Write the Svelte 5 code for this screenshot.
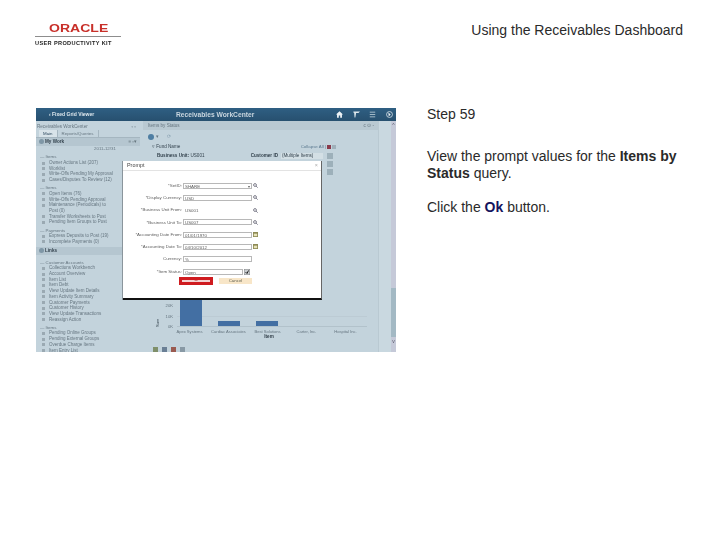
<script>
  const work = [
    { h: 'Items', rows: ['Owner Actions List (207)', 'Worklist', 'Write-Offs Pending My Approval', 'Cases/Disputes To Review (12)'] },
    { h: 'Items', rows: ['Open Items (76)', 'Write-Offs Pending Approval', 'Maintenance (Periodicals) to Post (0)', 'Transfer Worksheets to Post', 'Pending Item Groups to Post'] },
    { h: 'Payments', rows: ['Express Deposits to Post (19)', 'Incomplete Payments (0)'] }
  ]
  const links = [
    { h: 'Customer Accounts', rows: ['Collections Workbench', 'Account Overview', 'Item List', 'Item Debt', 'View Update Item Details', 'Item Activity Summary', 'Customer Payments', 'Customer History', 'View Update Transactions', 'Reassign Action'] },
    { h: 'Items', rows: ['Pending Online Groups', 'Pending External Groups', 'Overdue Charge Items', 'Item Entry List'] }
  ]
  const fields = [
    { label: '*SetID:', value: 'SHARE', kind: 'search', mark: true },
    { label: '*Display Currency:', value: 'USD', kind: 'search' },
    { label: '*Business Unit From:', value: 'US001', kind: 'search', bare: true },
    { label: '*Business Unit To:', value: 'US007', kind: 'search' },
    { label: '*Accounting Date From:', value: '01/01/1970', kind: 'date' },
    { label: '*Accounting Date To:', value: '04/10/2012', kind: 'date' },
    { label: 'Currency:', value: '%', kind: 'none' },
    { label: '*Item Status:', value: 'Open', kind: 'select' }
  ]
  const ticks = ['30K', '20K', '10K', '0K']
  const bars = [
    { label: 'Apex Systems', height: 30 },
    { label: 'Cardiac Associates', height: 5 },
    { label: 'Best Solutions', height: 5 },
    { label: 'Carter, Inc.', height: 0 },
    { label: 'Hospital Inc.', height: 0 }
  ]
</script>

<div class="page">
  <header class="top">
    <div class="logo">
      <div class="oracle">ORACLE</div>
      <div class="kit">USER PRODUCTIVITY KIT</div>
    </div>
    <div class="doc-title">Using the Receivables Dashboard</div>
  </header>

  <div class="content">
    <div class="shot">
      <div class="titlebar">
        <span class="back">‹ Fixed Grid Viewer</span>
        <span class="wc-title">Receivables WorkCenter</span>
        <span class="tb-icons">
          <svg width="7" height="7" viewBox="0 0 10 9"><path d="M5 0 10 4.5H8.5V9H6V6H4V9H1.5V4.5H0Z" fill="#eef3f6"/></svg>
          <svg width="7" height="7" viewBox="0 0 9 8"><path d="M1 0H9L7 2.2H4L3 8H2L1.5 2.2 0 .8Z" fill="#dde7ec"/></svg>
          <svg width="7" height="7" viewBox="0 0 9 8"><path d="M1 1H8M1 4H8M1 7H8" stroke="#c5d6df"/></svg>
          <svg width="7" height="7" viewBox="0 0 9 9"><circle cx="4.5" cy="4.5" r="3.8" fill="none" stroke="#dde7ec"/><path d="M3 2 6 4.5 3.5 7Z" fill="#eef3f6"/></svg>
        </span>
      </div>

      <div class="workarea">
        <aside class="nav">
          <div class="nav-head"><span>Receivables WorkCenter</span><span>▫ ▫</span></div>
          <div class="tabs"><span class="tab on">Main</span><span class="tab">Reports/Queries</span></div>
          <div class="band"><span class="band-name"><i class="globe"></i>My Work</span><span class="band-side">≡ ▫▾</span></div>
          <div class="date">2011-12/31</div>
          {#each work as group}
            <div class="group-h">— {group.h}</div>
            {#each group.rows as row}
              <div class="nav-row">{row}</div>
            {/each}
          {/each}
          <div class="band links"><span class="band-name"><i class="globe"></i>Links</span><span class="band-side">▫</span></div>
          {#each links as group}
            <div class="group-h">— {group.h}</div>
            {#each group.rows as row}
              <div class="nav-row">{row}</div>
            {/each}
          {/each}
        </aside>

        <main class="pane">
          <div class="pane-head"><span>Items by Status</span><span>c ⊙ -</span></div>
          <div class="toolbar"><i class="gear"></i><span>▾</span><span class="tool2">⟳</span></div>
          <div class="row-fund">
            <span class="p-label">▿ Fund Name</span>
            <span class="actions">Collapse All | <i class="mini red"></i><i class="mini"></i></span>
          </div>
          <div class="row-prompt">
            <span class="p-label"><b>Business Unit:</b> US001</span>
            <span class="p-right"><b>Customer ID</b><span class="p-input">(Multiple Items)</span><i class="p-btn"></i></span>
          </div>
          <div class="p-extra"><i class="p-btn"></i><i class="p-btn"></i></div>

          <div class="chart">
            <div class="plot">
              <span class="y-title">Sum</span>
              <div class="y-axis">
                {#each ticks as t}<span>{t}</span>{/each}
              </div>
              <div class="bars">
                {#each bars as bar}
                  <div class="bar-slot">
                    <div class="bar" style="height: {bar.height}px"></div>
                  </div>
                {/each}
              </div>
            </div>
            <div class="x-labels">
              {#each bars as bar}<span>{bar.label}</span>{/each}
            </div>
            <div class="x-title">Item</div>
            <div class="chart-icons"><i class="ci a"></i><i class="ci b"></i><i class="ci c"></i><i class="ci d"></i></div>
          </div>
        </main>

        <div class="gutter"></div>
        <div class="scroll">
          <span class="arrow">^</span>
          <div class="thumb"></div>
          <span class="arrow end">v</span>
        </div>
      </div>

      <div class="dialog">
        <div class="dialog-head"><span>Prompt</span><span class="x">×</span></div>
        <div class="form">
          {#each fields as f}
            <div class="field">
              <span class="f-label">{f.label}</span>
              <span class="f-input" class:bare={f.bare} class:short={f.kind === 'select'}>
                {f.value}
                {#if f.mark}<em>▾</em>{/if}
              </span>
              {#if f.kind === 'search'}
                <svg class="f-icon" width="5" height="5" viewBox="0 0 6 6"><circle cx="2.4" cy="2.4" r="1.7" fill="none" stroke="#667"/><path d="M3.7 3.7 5.6 5.6" stroke="#667"/></svg>
              {:else if f.kind === 'date'}
                <svg class="f-icon" width="5" height="5" viewBox="0 0 6 6"><rect width="6" height="6" fill="#8d8a55"/><rect x="1" y="2" width="4" height="3" fill="#e6e2b8"/></svg>
              {:else if f.kind === 'select'}
                <svg class="f-icon sel" width="6" height="6" viewBox="0 0 6 6"><rect width="6" height="6" fill="#c9cdd0" stroke="#666" stroke-width=".6"/><path d="M1.5 3 3 4.5 4.5 1.5" fill="none" stroke="#222"/></svg>
              {/if}
            </div>
          {/each}
        </div>
        <div class="dialog-btns">
          <span class="ok"><span class="ok-inner">OK</span></span>
          <span class="cancel">Cancel</span>
        </div>
      </div>
    </div>

    <section class="copy">
      <p class="step">Step 59</p>
      <p>View the prompt values for the <b>Items by Status</b> query.</p>
      <p>Click the <b class="ok-word">Ok</b> button.</p>
    </section>
  </div>
</div>

<style>
  :global(body) {
    margin: 0;
    background: #fff;
  }

  .page {
    width: 720px;
    height: 540px;
    overflow: hidden;
    font-family: 'Liberation Sans', Arial, sans-serif;
    color: #1c1c1c;
  }

  .top {
    height: 108px;
    display: flex;
    justify-content: space-between;
    align-items: flex-start;
    padding: 0 37px 0 35px;
    box-sizing: border-box;
  }

  .logo {
    width: 86px;
    margin-top: 23px;
  }

  .oracle {
    height: 13px;
    padding-left: 14px;
    font-size: 11.5px;
    line-height: 10px;
    font-weight: bold;
    color: #c8302a;
    transform: scaleX(1.22);
    transform-origin: 14px 0;
    box-sizing: border-box;
    filter: blur(0.3px);
  }

  .kit {
    padding-top: 3px;
    border-top: 1px solid #8d8d8d;
    font-size: 5.6px;
    line-height: 7px;
    font-weight: bold;
    letter-spacing: 0.36px;
    white-space: nowrap;
    filter: blur(0.2px);
  }

  .doc-title {
    margin-top: 22px;
    font-size: 14px;
    line-height: 16px;
    white-space: nowrap;
    color: #2a2a2a;
  }

  .content {
    display: flex;
    align-items: flex-start;
    padding-left: 36px;
  }

  .shot {
    position: relative;
    width: 360px;
    height: 244px;
    flex: none;
    overflow: hidden;
    display: flex;
    flex-direction: column;
    background: #c3d3dc;
    font-size: 4.6px;
    line-height: 5.7px;
    color: #667680;
    filter: blur(0.4px);
  }

  .titlebar {
    height: 13px;
    flex: none;
    display: grid;
    grid-template-columns: 127px 1fr auto;
    align-items: center;
    padding: 0 3px 0 13px;
    background: linear-gradient(#2f5f83, #27506f);
    color: #dfe8ee;
  }

  .back {
    font-size: 5px;
    font-weight: bold;
  }

  .wc-title {
    font-size: 6.7px;
    font-weight: bold;
    color: #c9d6df;
  }

  .tb-icons {
    display: flex;
    align-items: center;
    gap: 9.6px;
  }

  .workarea {
    flex: 1;
    min-height: 0;
    display: flex;
  }

  .nav {
    width: 104px;
    flex: none;
    overflow: hidden;
    white-space: nowrap;
  }

  .nav-head {
    display: flex;
    justify-content: space-between;
    height: 9px;
    padding: 3px 4px 0 1px;
    box-sizing: border-box;
  }

  .tabs {
    display: flex;
    height: 7px;
    padding-left: 3px;
    border-bottom: 1px solid #a5b6c0;
  }

  .tab {
    padding: 1px 4px 0;
    border-right: 1px solid #a5b6c0;
    font-size: 4.4px;
  }

  .tab.on {
    background: #d8e3e9;
    color: #2f4a5f;
  }

  .band {
    display: flex;
    justify-content: space-between;
    align-items: center;
    height: 8px;
    padding: 0 3px 0 3px;
    background: #b5c6d0;
  }

  .band-name {
    display: flex;
    align-items: center;
    gap: 1px;
    font-weight: bold;
    color: #33424d;
  }

  .band-side {
    color: #64737c;
  }

  .globe {
    width: 5px;
    height: 5px;
    border-radius: 50%;
    background: #7f97a6;
  }

  .links {
    margin-top: 2px;
    margin-bottom: 5px;
  }

  .date {
    height: 6px;
    padding-left: 58px;
    font-size: 4.4px;
  }

  .group-h {
    height: 5.7px;
    margin-top: 2.4px;
    padding-left: 4px;
    font-size: 4.4px;
  }

  .nav-row {
    min-height: 5.7px;
    padding: 0 27px 0 13px;
    position: relative;
    white-space: normal;
    font-size: 4.5px;
  }

  /* little doc icon before each link */
  .nav-row::before {
    content: '';
    position: absolute;
    left: 6px;
    top: 1.5px;
    width: 3px;
    height: 3px;
    background: #9aa9b2;
  }

  .pane {
    flex: 1;
    min-width: 0;
    display: flex;
    flex-direction: column;
  }

  .pane-head {
    display: flex;
    justify-content: space-between;
    height: 9px;
    padding: 2px 4px 0 5px;
    margin-left: 3px;
    box-sizing: border-box;
    background: #b9c9d2;
  }

  .toolbar {
    display: flex;
    align-items: center;
    gap: 2px;
    height: 14px;
    padding-left: 8px;
  }

  .gear {
    width: 6px;
    height: 6px;
    border-radius: 50%;
    background: #4e7ea3;
  }

  .tool2 {
    margin-left: 6px;
    color: #8aa2b2;
  }

  .row-fund {
    display: flex;
    justify-content: space-between;
    align-items: center;
    height: 6px;
    padding: 0 42px 0 12px;
  }

  .actions {
    display: flex;
    align-items: center;
    gap: 1px;
    font-size: 4.4px;
    color: #5c7a90;
  }

  .mini {
    width: 4px;
    height: 4px;
    background: #9fb0ba;
  }

  .mini.red {
    background: #8a3b4c;
  }

  .row-prompt {
    display: flex;
    justify-content: space-between;
    align-items: center;
    height: 7px;
    margin-top: 2px;
    padding: 0 45px 0 17px;
  }

  .p-label {
    color: #33424d;
  }

  .p-right {
    display: flex;
    align-items: center;
    gap: 3px;
    color: #33424d;
  }

  .p-input {
    width: 42px;
    height: 6px;
    margin-right: 1px;
    line-height: 6px;
    padding-left: 1px;
    box-sizing: border-box;
    background: #d3dfe5;
    white-space: nowrap;
    overflow: hidden;
  }

  .p-btn {
    display: block;
    width: 6px;
    height: 6px;
    background: #9db0ba;
  }

  .p-extra {
    display: flex;
    flex-direction: column;
    align-items: flex-end;
    gap: 2px;
    padding: 2px 45px 0 0;
  }

  .chart {
    margin-top: auto;
    padding-left: 15px;
  }

  .plot {
    display: flex;
    height: 33px;
  }

  .y-title {
    width: 5px;
    flex: none;
    font-size: 4px;
    line-height: 5px;
    writing-mode: vertical-rl;
    transform: rotate(180deg);
    color: #33424d;
  }

  .y-axis {
    display: flex;
    flex-direction: column;
    justify-content: space-between;
    width: 17px;
    flex: none;
    font-size: 4.2px;
    line-height: 4.4px;
    text-align: right;
    padding-right: 4px;
    box-sizing: border-box;
    margin-bottom: -2px;
  }

  .bars {
    flex: 1;
    display: flex;
    gap: 16px;
    padding-left: 3px;
    border-bottom: 1px solid #b2c2cb;
    margin-right: 11px;
    background: repeating-linear-gradient(to top, transparent 0 9px, #bccbd4 9px 9.5px);
  }

  .bar-slot {
    width: 22px;
    flex: none;
    display: flex;
    align-items: flex-end;
  }

  .bar {
    width: 100%;
    background: #436fa3;
  }

  .x-labels {
    display: flex;
    padding: 2px 0 0 15px;
    font-size: 4.1px;
    line-height: 5px;
    white-space: nowrap;
  }

  .x-labels span {
    width: 39px;
    flex: none;
    text-align: center;
  }

  .x-title {
    text-align: center;
    padding-left: 5px;
    font-size: 4.6px;
    font-weight: bold;
    color: #2f3c46;
  }

  .chart-icons {
    display: flex;
    gap: 4px;
    height: 5px;
    margin-top: 7px;
    margin-left: -2px;
  }

  .ci {
    width: 5px;
    height: 5px;
  }

  .ci.a { background: #7f8f6a; }
  .ci.b { background: #6a7f95; }
  .ci.c { background: #9a5a50; }
  .ci.d { background: #8899a5; }

  .gutter {
    width: 13px;
    flex: none;
    background: #c9d8e0;
    border-left: 1px solid #b9c9d2;
    box-sizing: border-box;
  }

  .scroll {
    width: 5px;
    flex: none;
    display: flex;
    flex-direction: column;
    align-items: center;
    background: #c5c9d8;
    font-size: 5px;
  }

  .arrow {
    height: 8px;
    line-height: 8px;
    color: #556;
  }

  .arrow.end {
    height: 15px;
  }

  .thumb {
    width: 100%;
    height: 49px;
    margin-top: auto;
    background: #a3b9c4;
  }

  .dialog {
    position: absolute;
    left: 87px;
    top: 53px;
    width: 199px;
    height: 139px;
    box-sizing: border-box;
    background: #fff;
    border-right: 1px solid #666;
    border-bottom: 2px solid #111;
    box-shadow: -1px 0 0 #8a959c;
    color: #5d5d5d;
  }

  .dialog-head {
    display: flex;
    justify-content: space-between;
    align-items: center;
    height: 9px;
    padding: 0 3px 0 4px;
    border-bottom: 1px solid #e3e3e3;
    font-size: 5.4px;
    color: #444;
  }

  .x {
    color: #aaa;
  }

  .form {
    display: flex;
    flex-direction: column;
    gap: 7.3px;
    padding-top: 12px;
  }

  .field {
    display: flex;
    align-items: center;
    height: 5px;
  }

  .f-label {
    width: 59px;
    flex: none;
    text-align: right;
    font-size: 4.4px;
    white-space: nowrap;
  }

  .f-input {
    position: relative;
    width: 69px;
    height: 6px;
    line-height: 5px;
    margin-left: 1px;
    padding-left: 1px;
    box-sizing: border-box;
    border: 0.5px solid #b8b8b8;
    font-size: 4.4px;
  }

  .f-input.bare {
    border-color: transparent;
  }

  .f-input.short {
    width: 60px;
  }

  .f-input em {
    position: absolute;
    right: 1px;
    top: 0;
    font-style: normal;
    font-size: 4px;
  }

  .f-icon {
    margin-left: 0.5px;
    flex: none;
  }

  .dialog-btns {
    display: flex;
    align-items: center;
    gap: 6px;
    padding: 3px 0 0 56px;
  }

  /* red highlight box sits around the Ok button */
  .ok {
    display: flex;
    align-items: center;
    justify-content: center;
    width: 34px;
    height: 8px;
    background: #cf1b1f;
  }

  .ok-inner {
    width: 28px;
    height: 2.5px;
    line-height: 2.5px;
    text-align: center;
    background: #f4d2d2;
    color: #a33;
    font-size: 2.5px;
    font-weight: bold;
  }

  .cancel {
    width: 33px;
    height: 6px;
    line-height: 6px;
    text-align: center;
    background: #f8e6c8;
    font-size: 4.4px;
    color: #665;
  }

  .copy {
    margin-left: 31px;
    width: 262px;
    margin-top: -2px;
    font-size: 14px;
    line-height: 17px;
    color: #2a2a2a;
  }

  .copy p {
    margin: 0 0 17px;
  }

  .copy .step {
    margin-bottom: 25px;
  }

  .ok-word {
    color: #14145e;
  }
</style>
